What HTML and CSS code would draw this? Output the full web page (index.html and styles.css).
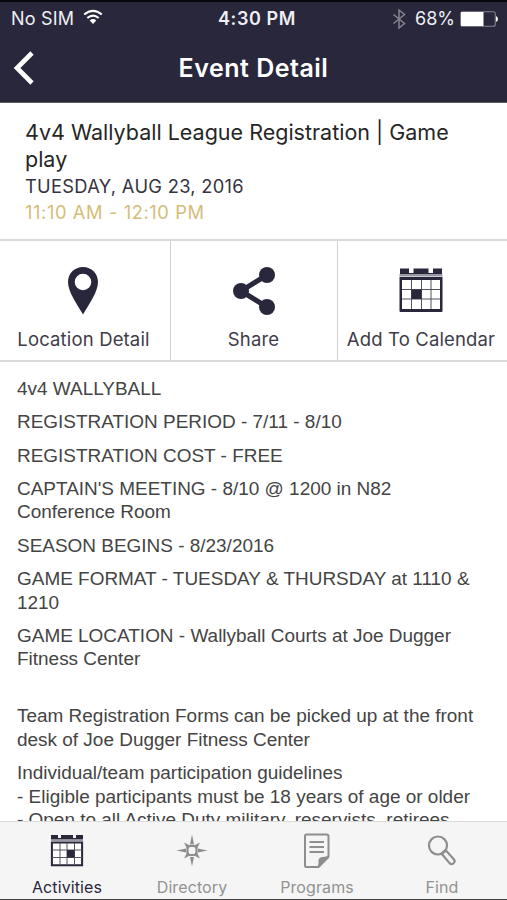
FILE: index.html
```html
<!DOCTYPE html>
<html lang="en">

<head>
    <meta charset="UTF-8">
    <meta name="viewport" content="width=device-width, initial-scale=1.0">
    <title>Event Detail</title>
    <link rel="stylesheet" href="styles.css">
</head>

<body>
    <header class="header">
        <div class="status">
            <div class="status-left">
                <span class="carrier">No SIM</span>
                <svg class="wifi" width="20" height="15" viewBox="0 0 20 15">
                    <path d="M1.200 4.500Q10 -2.600 18.800 4.500M4.300 8Q10 3.200 15.700 8" fill="none" stroke="#fff" stroke-width="2.100" />
                    <path d="M6.700 10.500Q10 7.700 13.300 10.500L10 14z" fill="#fff" />
                </svg>
            </div>
            <span class="clock">4:30 PM</span>
            <div class="status-right">
                <svg class="bluetooth" width="14" height="20" viewBox="0 0 14 20">
                    <path d="M1.500 5.500l11 9-5.500 4.500V1l5.500 4.500-11 9" fill="none" stroke="#85838f" stroke-width="1.500" />
                </svg>
                <span class="percent">68%</span>
                <svg class="battery" width="38" height="16" viewBox="0 0 38 16">
                    <rect x=".7" y=".7" width="34.600" height="14.600" rx="2" fill="none" stroke="#85838f" stroke-width="1.100" />
                    <path d="M1 1h22.500v14H1z" fill="#fff" />
                    <path d="M36 5q2 1 2 3t-2 3z" fill="#fff" />
                </svg>
            </div>
        </div>
        <div class="nav">
            <svg class="back" width="22" height="34" viewBox="0 0 22 34">
                <path d="M19 2L4 17l15 15" fill="none" stroke="#fff" stroke-width="4.600" />
            </svg>
            <span class="nav-title">Event Detail</span>
        </div>
    </header>

    <section class="event">
        <div class="event-name">4v4 Wallyball League Registration | Game play</div>
        <div class="event-date">TUESDAY, AUG 23, 2016</div>
        <div class="event-time">11:10 AM - 12:10 PM</div>
    </section>

    <div class="actions">
        <div class="action">
            <svg width="32" height="48" viewBox="0 0 32 48">
                <path fill-rule="evenodd" d="M15 0C6.500 0 0 6.500 0 15c0 10 9 22 15 32.500C21 37 30 25 30 15 30 6.500 23.500 0 15 0zm0 6.700a8.300 8.300 0 1 1 0 16.600 8.300 8.300 0 0 1 0-16.600z" fill="#29273b" />
            </svg>
            <span class="action-name">Location Detail</span>
        </div>
        <div class="action">
            <svg width="42" height="48" viewBox="0 0 42 48">
                <path d="M34 8L8 24l26 16" fill="none" stroke="#29273b" stroke-width="5" />
                <circle cx="34" cy="8" r="8" fill="#29273b" />
                <circle cx="8" cy="24" r="8" fill="#29273b" />
                <circle cx="34" cy="40" r="8" fill="#29273b" />
            </svg>
            <span class="action-name">Share</span>
        </div>
        <div class="action">
            <svg width="44" height="48" viewBox="0 0 44 48">
                <path d="M1 1.500h9V6h4.500V1.500h15V6H34V1.500h9V7H1z" fill="#29273b" />
                <path d="M.5 7h43v2.500H.5z" fill="#9796a2" />
                <path fill-rule="evenodd" d="M.5 10h43v34q0 1-1 1h-41q-1 0-1-1zM3 13v29h38V13z" fill="#29273b" />
                <path d="M12.500 13v29M22.500 13v29M32 13v29M3 22.500h38M3 32h38" stroke="#55535f" stroke-width="1" />
                <path d="M12.500 22.500h10V32h-10z" fill="#29273b" />
            </svg>
            <span class="action-name">Add To Calendar</span>
        </div>
    </div>

    <main class="details">
        <p>4v4 WALLYBALL</p>
        <p>REGISTRATION PERIOD - 7/11 - 8/10</p>
        <p>REGISTRATION COST - FREE</p>
        <p>CAPTAIN'S MEETING - 8/10 @ 1200 in N82<br>Conference Room</p>
        <p>SEASON BEGINS - 8/23/2016</p>
        <p>GAME FORMAT - TUESDAY &amp; THURSDAY at 1110 &amp;<br>1210</p>
        <p>GAME LOCATION - Wallyball Courts at Joe Dugger<br>Fitness Center</p>
        <p><br>Team Registration Forms can be picked up at the front<br>desk of Joe Dugger Fitness Center</p>
        <p>Individual/team participation guidelines<br>- Eligible participants must be 18 years of age or older<br>- Open to all Active Duty military, reservists, retirees,</p>
    </main>

    <nav class="tabs">
        <div class="tab active">
            <svg width="34" height="34" viewBox="0 0 34 34">
                <path d="M1 0h7v3h3V0h12v3h3V0h7v4.500H1z" fill="#29273b" />
                <path d="M1 5.500h32" stroke="#9796a2" stroke-width="1" />
                <path d="M1.900 7.500h30.200V30.200H1.900z" fill="#fff" stroke="#29273b" stroke-width="2" />
                <path d="M10 8v22M17 8v22M24.500 8v22M2 15h30M2 22.500h30" stroke="#55535f" stroke-width="1" />
                <path d="M17 15h7.500v7.500H17z" fill="#29273b" />
            </svg>
            <span>Activities</span>
        </div>
        <div class="tab">
            <svg width="34" height="34" viewBox="0 0 34 34">
                <path d="M17 -.5l2 10h-4zM17 31.500l2-9.500h-4zM1.500 15.500l9.500-2v4zM32.500 15.500l-9.500-2v4z" fill="#8e8e8e" />
                <path d="M9 7.500l6 3-3 3zM25 7.500l-6 3 3 3zM9 23.500l6-3-3-3zM25 23.500l-6-3 3-3z" fill="#8e8e8e" />
                <rect x="12.500" y="11" width="9" height="9" rx="3" fill="#f5f5f5" stroke="#8e8e8e" stroke-width="2.200" />
            </svg>
            <span>Directory</span>
        </div>
        <div class="tab">
            <svg width="34" height="34" viewBox="0 0 34 34">
                <path d="M6.500 -.5h20q2 0 2 2V21.500L18.500 32h-12Q5 32 5 30.500V1Q5 -.5 6.500 -.5z" fill="none" stroke="#8e8e8e" stroke-width="2" />
                <path d="M9.500 7h14.500M9.500 12h14.500M9.500 17h14.500" stroke="#8e8e8e" stroke-width="2" />
                <path d="M17.500 32q1.500-3 1-6 0-4 4.500-4 3.500 0 6-2v3l-9.500 9z" fill="#8e8e8e" />
            </svg>
            <span>Programs</span>
        </div>
        <div class="tab">
            <svg width="34" height="34" viewBox="0 0 34 34">
                <circle cx="13" cy="10.500" r="9" fill="none" stroke="#8e8e8e" stroke-width="2.200" />
                <path d="M16.500 18.500l4-3.500 8.500 9.500q1.500 2-.5 3.800t-4-.2z" fill="none" stroke="#8e8e8e" stroke-width="2.200" />
            </svg>
            <span>Find</span>
        </div>
    </nav>
</body>

</html>
```

FILE: styles.css
```css
* {
    box-sizing: border-box;
}

body {
    margin: 0;
    height: 900px;
    display: flex;
    flex-direction: column;
    overflow: hidden;
    background-color: #fff;
    font-family: Inter, 'Liberation Sans', sans-serif;
}

svg {
    display: block;
    flex: none;
    overflow: visible;
}

.header {
    flex: none;
    height: 103px;
    background-color: #29273b;
    border-top: 2px solid #08080c;
    border-bottom: 1px solid #5b5968;
    color: #fff;
}

.status {
    display: grid;
    grid-template-columns: 1fr auto 1fr;
    align-items: center;
    height: 33px;
    padding: 0 9px 0 11px;
    font-size: 18px;
    color: #eeeef3;
}

.status-left,
.status-right {
    display: flex;
    align-items: center;
}

.status-right {
    justify-content: flex-end;
}

.carrier {
    margin-right: 9px;
    letter-spacing: 0.2px;
}

.wifi {
    margin-top: -2px;
}

.clock {
    font-weight: 600;
    letter-spacing: 0.6px;
    padding-left: 5px;
}

.percent {
    margin: 0 5px 0 9px;
}

.nav {
    display: grid;
    grid-template-columns: 60px 1fr 60px;
    align-items: center;
    height: 66px;
}

.back {
    margin-left: 13px;
}

.nav-title {
    text-align: center;
    font-size: 25px;
    font-weight: 600;
    letter-spacing: 0.5px;
}

.event {
    flex: none;
    height: 136px;
    padding: 16px 25px 0;
}

.event-name {
    font-size: 21.5px;
    line-height: 26.5px;
    color: #262626;
}

.event-date,
.event-time {
    margin-top: 1px;
    font-size: 18.3px;
    line-height: 26px;
    letter-spacing: 0.3px;
    color: #353341;
}

.event-time {
    margin-top: 0;
    letter-spacing: 0.6px;
    color: #d4bd79;
}

.actions {
    flex: none;
    display: grid;
    grid-template-columns: 170px 167px 170px;
    height: 123px;
    border-top: 2px solid #d9d9d9;
    border-bottom: 2px solid #d9d9d9;
}

.action {
    display: flex;
    flex-direction: column;
    align-items: center;
    padding: 26px 3px 0 0;
    color: #3e3c48;
    font-size: 18.5px;
    letter-spacing: 0.15px;
}

.action + .action {
    border-left: 1px solid #d0d0d0;
}

.action:nth-child(2) {
    padding-right: 1px;
}

.action-name {
    margin-top: 12px;
    line-height: 24px;
    white-space: nowrap;
}

.details {
    flex: 1;
    min-height: 0;
    overflow: hidden;
    padding: 15.2px 17px 0;
    font-family: 'Liberation Sans', Arial, sans-serif;
    font-size: 18.97px;
    line-height: 23.66px;
    color: #444;
    white-space: nowrap;
}

.details p {
    margin: 0 0 9.55px;
}

.tabs {
    flex: none;
    display: grid;
    grid-template-columns: repeat(4, 125px);
    justify-content: center;
    height: 79px;
    padding-left: 3px;
    background-color: #f5f5f5;
    border-top: 1px solid #dcdcdc;
    border-bottom: 1px solid #444;
}

.tab {
    display: flex;
    flex-direction: column;
    align-items: center;
    padding-top: 13px;
    font-size: 16px;
    letter-spacing: 0.1px;
    color: #929292;
}

.tab svg {
    margin-right: 1px;
}

.tab span {
    margin-top: 8px;
    margin-right: 1px;
    line-height: 20px;
}

.active {
    color: #29273b;
}
```
